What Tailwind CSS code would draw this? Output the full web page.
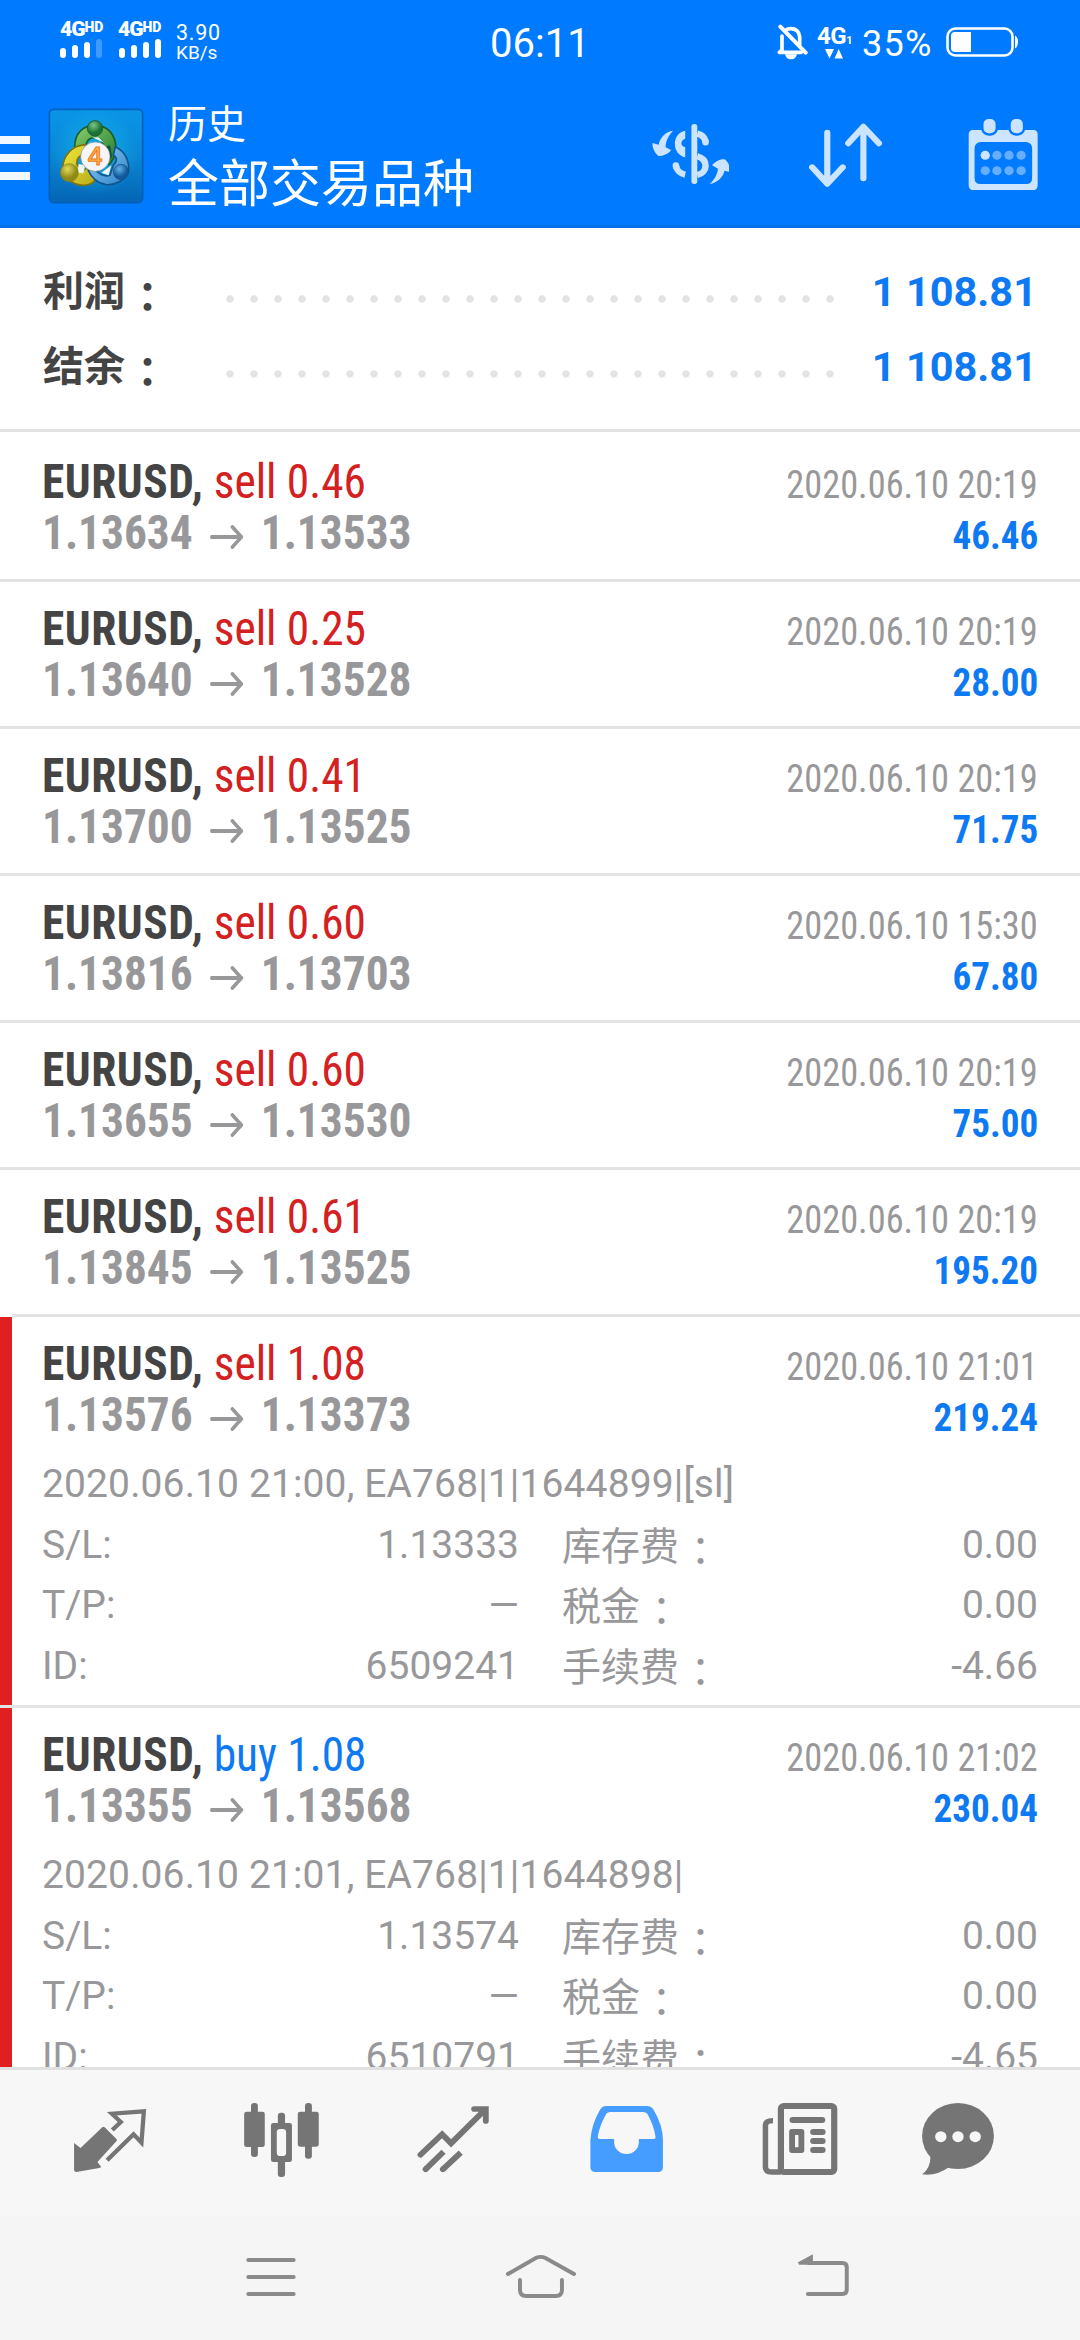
<!DOCTYPE html>
<html lang="zh-CN">
<head>
<meta charset="utf-8">
<title>历史</title>
<script src="https://cdn.jsdelivr.net/npm/@tailwindcss/browser@4"></script>
</head>
<body class="bg-white font-[Roboto,'Noto_Sans_CJK_SC',sans-serif]">
<div class="flex h-[2340px] w-[1080px] flex-col overflow-hidden">

  <!-- Blue header -->
  <header class="flex h-[228px] shrink-0 flex-col border-b-3 border-[#0070e6] bg-[#007aff] text-white">
    <div class="flex h-[88px] items-start">
      <div class="mt-[19px] ml-[60px] flex w-[58px] flex-col">
        <div class="flex h-[18px] items-start font-black"><span class="w-[24.500px] text-[21px] leading-[21px] tracking-[-1px]">4G</span><span class="text-[14px] leading-[17px]">HD</span></div>
        <div class="mt-px flex h-[20px] items-end gap-[6px]"><i class="h-[10px] w-[6px] rounded-sm bg-white"></i><i class="h-[13px] w-[6px] rounded-sm bg-white"></i><i class="h-[16px] w-[6px] rounded-sm bg-white"></i><i class="h-[19px] w-[6px] rounded-sm bg-white/25"></i></div>
      </div>
      <div class="mt-[19px] flex w-[46px] flex-col">
        <div class="flex h-[18px] items-start font-black"><span class="w-[24.500px] text-[21px] leading-[21px] tracking-[-1px]">4G</span><span class="text-[14px] leading-[17px]">HD</span></div>
        <div class="mt-px flex h-[20px] items-end gap-[6px] pl-px"><i class="h-[10px] w-[6px] rounded-sm bg-white"></i><i class="h-[13px] w-[6px] rounded-sm bg-white"></i><i class="h-[16px] w-[6px] rounded-sm bg-white"></i><i class="h-[19px] w-[6px] rounded-sm bg-white"></i></div>
      </div>
      <div class="mt-[23px] ml-[12px] w-[60px] text-[21.500px] leading-[20px]"><div class="tracking-[.7px]">3.90</div><div class="text-[19px]">KB/s</div></div>
      <div class="mt-[22px] ml-[254px] w-[101px] text-[40px] leading-[44px]">06:11</div>
      <svg class="mt-[24px] ml-[186px] h-[36px] w-[31px]" viewBox="687 72 93 108" preserveAspectRatio="none" fill="none" stroke="#fff" stroke-width="11" stroke-linecap="round" stroke-linejoin="round">
        <path d="M702 108V150L694 157H760M755 135V110C753 94 742 86 728 86C722 86 718 87 714 90"/>
        <path d="M697 80L773 158" stroke-width="12"/>
        <path d="M711 163H747C744 174 737 178 729 178S714 174 711 163Z" fill="#fff" stroke="none"/>
      </svg>
      <div class="mt-[24px] ml-[9px] flex w-[38px] flex-col">
        <div class="flex h-[25px] items-baseline"><span class="text-[24px] leading-[24px] font-bold tracking-[-.5px]">4G</span><span class="text-[11px] font-bold">1</span></div>
        <svg class="ml-[7px] h-[10px] w-[20px]" viewBox="0 0 20 10" fill="#fff"><path d="M1 0H10L5.500 9.500ZM10.500 9.500H19L14.700 0Z"/></svg>
      </div>
      <div class="mt-[23px] ml-[7px] w-[74px] text-[36px] leading-[42px] tracking-[1.300px] whitespace-nowrap">35%</div>
      <svg class="mt-[26px] ml-[10px] h-[32px] w-[74px]" viewBox="0 0 74 32">
        <rect x="1.500" y="2.500" width="65" height="27" rx="8" fill="none" stroke="#fff" stroke-width="2.600"/>
        <path d="M9 6H25V26H9Q5 26 5 22V10Q5 6 9 6Z" fill="#fff"/><path d="M69 9.500Q72 11 72 16T69 22.500Z" fill="#fff"/>
      </svg>
    </div>
    <div class="flex h-[137px] items-start">
      <div class="mt-[48px] flex w-[30px] flex-col gap-[10px]"><i class="h-2 bg-white/95"></i><i class="h-2 bg-white/95"></i><i class="h-2 bg-white/95"></i></div>
      <svg class="mt-[20px] ml-[18px] h-[96px] w-[96px]" viewBox="54 54 288 288">
        <defs>
          <linearGradient id="bg" x1="0" y1="0" x2="0" y2="1"><stop offset="0" stop-color="#0a95e8"/><stop offset=".5" stop-color="#0a86d4"/><stop offset="1" stop-color="#0465b4"/></linearGradient>
          <radialGradient id="glow"><stop offset="0" stop-color="#17b4e8" stop-opacity=".9"/><stop offset="1" stop-color="#17b4e8" stop-opacity="0"/></radialGradient>
          <linearGradient id="gr" x1="0" y1="0" x2="1" y2="1"><stop offset="0" stop-color="#8ccf6c"/><stop offset="1" stop-color="#1d7a30"/></linearGradient>
          <linearGradient id="ye" x1="0" y1="0" x2="1" y2="1"><stop offset="0" stop-color="#f3ea3c"/><stop offset="1" stop-color="#b8aa18"/></linearGradient>
          <linearGradient id="bl" x1="0" y1="0" x2="1" y2="1"><stop offset="0" stop-color="#8fd0f4"/><stop offset="1" stop-color="#2a80c8"/></linearGradient>
          <radialGradient id="gh" cx=".4" cy=".3"><stop offset="0" stop-color="#7cc886"/><stop offset="1" stop-color="#1a7236"/></radialGradient>
          <radialGradient id="yh" cx=".4" cy=".3"><stop offset="0" stop-color="#e4da5a"/><stop offset="1" stop-color="#8f8a18"/></radialGradient>
          <radialGradient id="bh" cx=".4" cy=".3"><stop offset="0" stop-color="#62b4ea"/><stop offset="1" stop-color="#125a9c"/></radialGradient>
        </defs>
        <rect x="58" y="58" width="280" height="280" rx="14" fill="url(#bg)" stroke="#0560b8" stroke-width="5"/>
        <circle cx="195" cy="185" r="130" fill="url(#glow)"/>
        <g stroke-linejoin="round">
          <path d="M134 172C134 128 160 106 195 106S258 130 258 178C254 204 246 216 236 224L205 190C226 170 222 146 195 142C172 144 166 160 168 176Z" fill="url(#gr)" stroke="#1b5f2b" stroke-width="5"/>
          <path d="M166 164C126 166 98 198 98 236C100 262 130 286 160 286C176 286 188 280 196 270L176 232L154 244L140 222C140 204 152 194 166 190Z" fill="url(#ye)" stroke="#7d7410" stroke-width="5"/>
          <path d="M256 170C284 184 298 210 296 244C288 270 256 286 228 284C204 280 184 262 174 240L196 240C208 252 224 262 240 256L250 226C262 216 262 202 250 196Z" fill="url(#bl)" stroke="#12538c" stroke-width="5"/>
          <path d="M146 222L166 226L160 250L142 248ZM244 226L236 256L214 248ZM186 142H206L222 158L205 150Z" fill="#e9f6f2"/>
          <path d="M222 172L240 166L246 200L230 216Z" fill="#0b5135"/>
        </g>
        <circle cx="195" cy="115" r="23" fill="url(#gh)" stroke="#1a6130" stroke-width="3"/>
        <circle cx="118" cy="248" r="27" fill="url(#yh)" stroke="#87801a" stroke-width="2"/>
        <circle cx="273" cy="246" r="23" fill="url(#bh)" stroke="#114f8a" stroke-width="2"/>
        <circle cx="196" cy="200" r="44" fill="#f6f6fa" stroke="#7b8c8c" stroke-width="2"/>
        <text x="195" y="226" text-anchor="middle" font-family="Inter,sans-serif" font-weight="500" font-size="74" fill="#ffb24a" stroke="#ec7a1c" stroke-width="3">4</text>
      </svg>
      <div class="mt-[12px] ml-[24px] w-[481px] font-['Noto_Sans_CJK_SC',sans-serif] whitespace-nowrap">
        <div class="text-[39px] leading-[42px]">历史</div>
        <div class="mt-[8px] text-[51px] leading-[60px]">全部交易品种</div>
      </div>
      <svg class="mt-[34px] h-[64px] w-[80px]" viewBox="313 366 232 192" preserveAspectRatio="none" fill="#cce4ff">
        <rect x="436" y="372" width="17" height="180" rx="8"/>
        <path d="M418 392C398 396 388 412 388 432S400 468 418 472V442C410 440 407 436 407 430S411 418 418 416ZM383 392C362 394 345 412 341 434L323 429C322 445 332 462 341 468C352 468 370 462 377 450L361 442C362 422 370 405 383 392ZM489 552C502 540 511 524 513 506L496 496C505 484 520 476 533 478C542 486 549 500 549 516L532 512C528 532 510 548 489 552Z"/>
        <g fill="none" stroke="#cce4ff" stroke-width="19"><path d="M391 497C393 511 404 521 418 524M453 401C466 404 475 411 477 426M453 469C470 474 477 484 477 497S468 522 453 525"/><g stroke-linecap="round"><path d="M391 496L391.500 500M477 424V427"/></g></g>
      </svg>
      <svg class="mt-[34px] ml-[78px] h-[66px] w-[76px]" viewBox="777 366 221 198" preserveAspectRatio="none" fill="none" stroke="#cce4ff" stroke-width="18" stroke-linecap="round" stroke-linejoin="round">
        <path d="M836 398V550M792 502L836 551L881 502M941 535V382M897 430L941 380L986 430"/>
      </svg>
      <svg class="mt-[30px] ml-[85px] h-[74px] w-[70px]" viewBox="1241 354 203 222" preserveAspectRatio="none" fill="#cce4ff">
        <path fill-rule="evenodd" d="M1255 390H1431Q1443 390 1443 404V556Q1443 570 1431 570H1255Q1243 570 1243 556V404Q1243 390 1255 390ZM1277 426Q1260 428 1260 446V534Q1260 552 1277 552H1410Q1427 552 1427 534V446Q1427 428 1410 426Z"/>
        <g stroke="#007aff" stroke-width="14" paint-order="stroke"><rect x="1286" y="357" width="35" height="43" rx="15"/><rect x="1365" y="357" width="35" height="43" rx="15"/></g>
        <circle cx="1291" cy="466" r="13.500"/>
        <g opacity=".5"><circle cx="1325" cy="466" r="13.500"/><circle cx="1360" cy="466" r="13.500"/><circle cx="1395" cy="466" r="13.500"/><circle cx="1291" cy="512" r="13.500"/><circle cx="1325" cy="512" r="13.500"/><circle cx="1360" cy="512" r="13.500"/><circle cx="1395" cy="512" r="13.500"/></g>
      </svg>
    </div>
  </header>

  <!-- Totals -->
  <section class="flex h-[204px] shrink-0 flex-col border-b-3 border-[#e3e3e3] px-[43px] pt-[25px] text-[41px]">
    <div class="flex h-[75px]">
      <div class="w-[183px] font-['Noto_Sans_CJK_SC',sans-serif] leading-[71px] font-bold text-[#444]">利润<span class="inline-block translate-x-[2px] translate-y-[6px] font-['Noto_Sans_CJK_JP']" lang="ja">：</span></div>
      <div class="mt-[42px] h-[8px] w-[612px] bg-[radial-gradient(circle_at_4px_4px,#e3e3e3_3.2px,transparent_4.200px)] bg-[length:24px_8px]"></div>
      <div class="flex-1 text-right text-[41.500px] leading-[77px] font-bold whitespace-nowrap text-[#0d79f2]">1 108.81</div>
    </div>
    <div class="flex h-[75px]">
      <div class="w-[183px] font-['Noto_Sans_CJK_SC',sans-serif] leading-[71px] font-bold text-[#444]">结余<span class="inline-block translate-x-[2px] translate-y-[6px] font-['Noto_Sans_CJK_JP']" lang="ja">：</span></div>
      <div class="mt-[42px] h-[8px] w-[612px] bg-[radial-gradient(circle_at_4px_4px,#e3e3e3_3.2px,transparent_4.200px)] bg-[length:24px_8px]"></div>
      <div class="flex-1 text-right text-[41.500px] leading-[77px] font-bold whitespace-nowrap text-[#0d79f2]">1 108.81</div>
    </div>
  </section>

  <!-- Deals -->
  <main id="deals" class="min-h-0 flex-1 overflow-hidden pt-[3px]"></main>

  <!-- Tab bar -->
  <nav class="flex h-[148px] shrink-0 items-start border-t-3 border-[#e0e0e0] bg-[#f7f7f7] pt-[32px] pl-[72px]">
    <svg class="h-[75px] w-[76px]" viewBox="209 156 221 225" preserveAspectRatio="none"><path d="M297 232Q300 229 304 232L339 268Q341 271 338 274L283 336L294 351Q292 353 288 354L222 366Q215 366 215 360V279L234 294Z" fill="#757575"/><path d="M326 240L351 216L325 191L418 184L411 278L388 253L311 331" fill="none" stroke="#757575" stroke-width="12.500"/></svg>
    <svg class="ml-[96px] h-[75px] w-[76px]" viewBox="708.600 156 221 225" preserveAspectRatio="none" fill="#757575"><rect x="729" y="159" width="20" height="162" rx="9"/><rect x="709" y="185" width="60" height="106" rx="7"/><rect x="886" y="159" width="20" height="167" rx="9"/><rect x="865" y="185" width="61" height="105" rx="7"/><rect x="807" y="188" width="21" height="193" rx="9"/><rect x="787" y="219" width="61" height="117" rx="7"/><rect x="804" y="237" width="27" height="81" rx="10" fill="#f7f7f7"/></svg>
    <svg class="ml-[96px] h-[75px] w-[76px]" viewBox="1208 156 221 225" preserveAspectRatio="none" fill="none" stroke="#757575" stroke-width="17"><path stroke-linecap="round" d="M1221 314L1284 253L1310 280L1410 178M1377 177H1411V213M1236 358L1237 357M1286 358L1287 357"/><path d="M1236 358L1288 305M1286 358L1338 308"/></svg>
    <svg class="ml-[97px] h-[75px] w-[76px]" viewBox="142 156 221 225" preserveAspectRatio="none" fill="#459dff"><path fill-rule="evenodd" d="M192 168H312Q322 168 328 176Q357 225 357 270V352Q357 366 343 366H161Q146 366 146 352V270Q150 220 175 178Q181 168 192 168ZM205 186Q194 186 190 196Q172 230 168 258Q166 267 174 267H215V276A36 36 0 0 0 287 276V267H330Q337 267 335 258Q331 230 314 196Q310 186 298 186Z"/></svg>
    <svg class="ml-[97px] h-[75px] w-[76px]" viewBox="645 156 221 225" preserveAspectRatio="none" fill="none" stroke="#757575" stroke-width="18"><rect x="700" y="168" width="155" height="198" rx="8"/><path stroke-width="16" d="M677 212Q655 212 655 226V350Q655 366 673 366H700"/><g fill="#757575" stroke="none"><rect x="725" y="201" width="104" height="18" rx="9"/><path fill-rule="evenodd" d="M732 237H760Q768 237 768 245V301Q768 309 760 309H732Q724 309 724 301V245Q724 237 732 237ZM741 255V292H751V255Z"/><rect x="785" y="237" width="45" height="18" rx="9"/><rect x="785" y="264" width="45" height="18" rx="9"/><rect x="785" y="291" width="45" height="18" rx="9"/></g></svg>
    <svg class="ml-[82px] h-[75px] w-[76px]" viewBox="1103.500 156 221 225" preserveAspectRatio="none" fill="#757575"><ellipse cx="1214" cy="258" rx="104.500" ry="99"/><path d="M1134 318Q1134 355 1110 373Q1148 380 1190 350Z"/><g fill="#f7f7f7"><circle cx="1164" cy="260" r="16.500"/><circle cx="1214" cy="260" r="16.500"/><circle cx="1264" cy="260" r="16.500"/></g></svg>
  </nav>

  <!-- System navigation -->
  <footer class="flex h-[125px] shrink-0 items-start bg-[#f5f5f5] pt-[37px] pl-[244px]">
    <svg class="h-[48px] w-[54px]" viewBox="708.600 606 157 144" preserveAspectRatio="none" fill="none" stroke="#8a8a8a" stroke-width="11.500" stroke-linecap="round"><path d="M721 630H853M721 681H853M721 732H853"/></svg>
    <svg class="ml-[206px] h-[48px] w-[74px]" viewBox="1463.600 606 215 144" preserveAspectRatio="none" fill="none" stroke="#8a8a8a" stroke-width="11.500" stroke-linecap="round"><path d="M1475 672L1556 624Q1570 617 1584 624L1667 672M1510 690V720Q1510 738 1528 738H1614Q1632 738 1632 720V690"/></svg>
    <svg class="ml-[219px] h-[48px] w-[54px]" viewBox="746.300 606 157 144" preserveAspectRatio="none" fill="none" stroke="#8a8a8a" stroke-width="11.500" stroke-linecap="round"><path d="M778 732H878Q891 732 891 719V652Q891 639 878 639H780"/><path d="M752 638L790 617V642H754Z" fill="#8a8a8a" stroke-width="5"/></svg>
  </footer>
</div>

<script>
const deals = [
  ['sell','0.46','1.13634','1.13533','2020.06.10 20:19','46.46'],
  ['sell','0.25','1.13640','1.13528','2020.06.10 20:19','28.00'],
  ['sell','0.41','1.13700','1.13525','2020.06.10 20:19','71.75'],
  ['sell','0.60','1.13816','1.13703','2020.06.10 15:30','67.80'],
  ['sell','0.60','1.13655','1.13530','2020.06.10 20:19','75.00'],
  ['sell','0.61','1.13845','1.13525','2020.06.10 20:19','195.20'],
  ['sell','1.08','1.13576','1.13373','2020.06.10 21:01','219.24',{c:'2020.06.10 21:00, EA768|1|1644899|[sl]',sl:'1.13333',id:'6509241',fee:'-4.66'}],
  ['buy','1.08','1.13355','1.13568','2020.06.10 21:02','230.04',{c:'2020.06.10 21:01, EA768|1|1644898|',sl:'1.13574',id:'6510791',fee:'-4.65'}]
];
const line = (a,b,c,d) => `<div class="flex h-[60.67px]"><div class="w-[160px]">${a}</div><div class="w-[317px] text-right">${b}</div><div class="ml-[43px] w-[200px] leading-[57px] whitespace-nowrap">${c}<span class="inline-block translate-x-[2px] translate-y-[5px] font-['Noto_Sans_CJK_JP']" lang="ja">：</span></div><div class="flex-1 text-right">${d}</div></div>`;
document.getElementById('deals').innerHTML = deals.map(([side,vol,from,to,time,profit,x], i) => `
<article class="${x ? 'h-[391px] border-l-12 border-l-[#e02020] pl-[30px]' : 'h-[147px] pl-[42px]'} relative pr-[42px] pt-[21px] whitespace-nowrap">
  <div class="flex h-[51px] items-baseline justify-between text-[48px] leading-[51px] font-stretch-condensed">
    <div class="origin-left scale-x-[.945]"><b class="tracking-[.550px] text-[#444]">EURUSD,</b> <span class="${side === 'buy' ? 'text-[#0d79f2]' : 'text-[#d42020]'}">${side} ${vol}</span></div>
    <div class="origin-right scale-x-[.932] text-[39px] text-[#98989a]">${time}</div>
  </div>
  <div class="flex h-[51px] items-baseline justify-between text-[48px] leading-[51px] font-stretch-condensed">
    <div class="flex origin-left scale-x-[.945] items-baseline font-bold text-[#98989a]"><span>${from}</span><svg class="mx-[18px] h-[24px] w-[36px]" viewBox="0 0 36 24" fill="none" stroke="#98989a" stroke-width="3.800" stroke-linecap="round" stroke-linejoin="round"><path d="M1.500 12H33M23.500 2L33 12L23.500 22"/></svg><span>${to}</span></div>
    <div class="origin-right scale-x-[.95] text-[39px] font-bold text-[#0d79f2]">${profit}</div>
  </div>
  ${x ? `<div class="mt-[14px] text-[39px] leading-[60.67px] text-[#98989a]"><div class="h-[60.67px] tracking-[.120px]">${x.c}</div>${line('S/L:',x.sl,'库存费','0.00')}${line('T/P:','—','税金','0.00')}${line('ID:',x.id,'手续费',x.fee)}</div>` : ''}
  <div class="absolute right-0 bottom-0 ${x ? '-left-[12px]' : i === 5 ? 'left-[12px]' : 'left-0'} h-[3px] bg-[#e3e3e3]"></div>
</article>`).join('');
</script>
</body>
</html>
